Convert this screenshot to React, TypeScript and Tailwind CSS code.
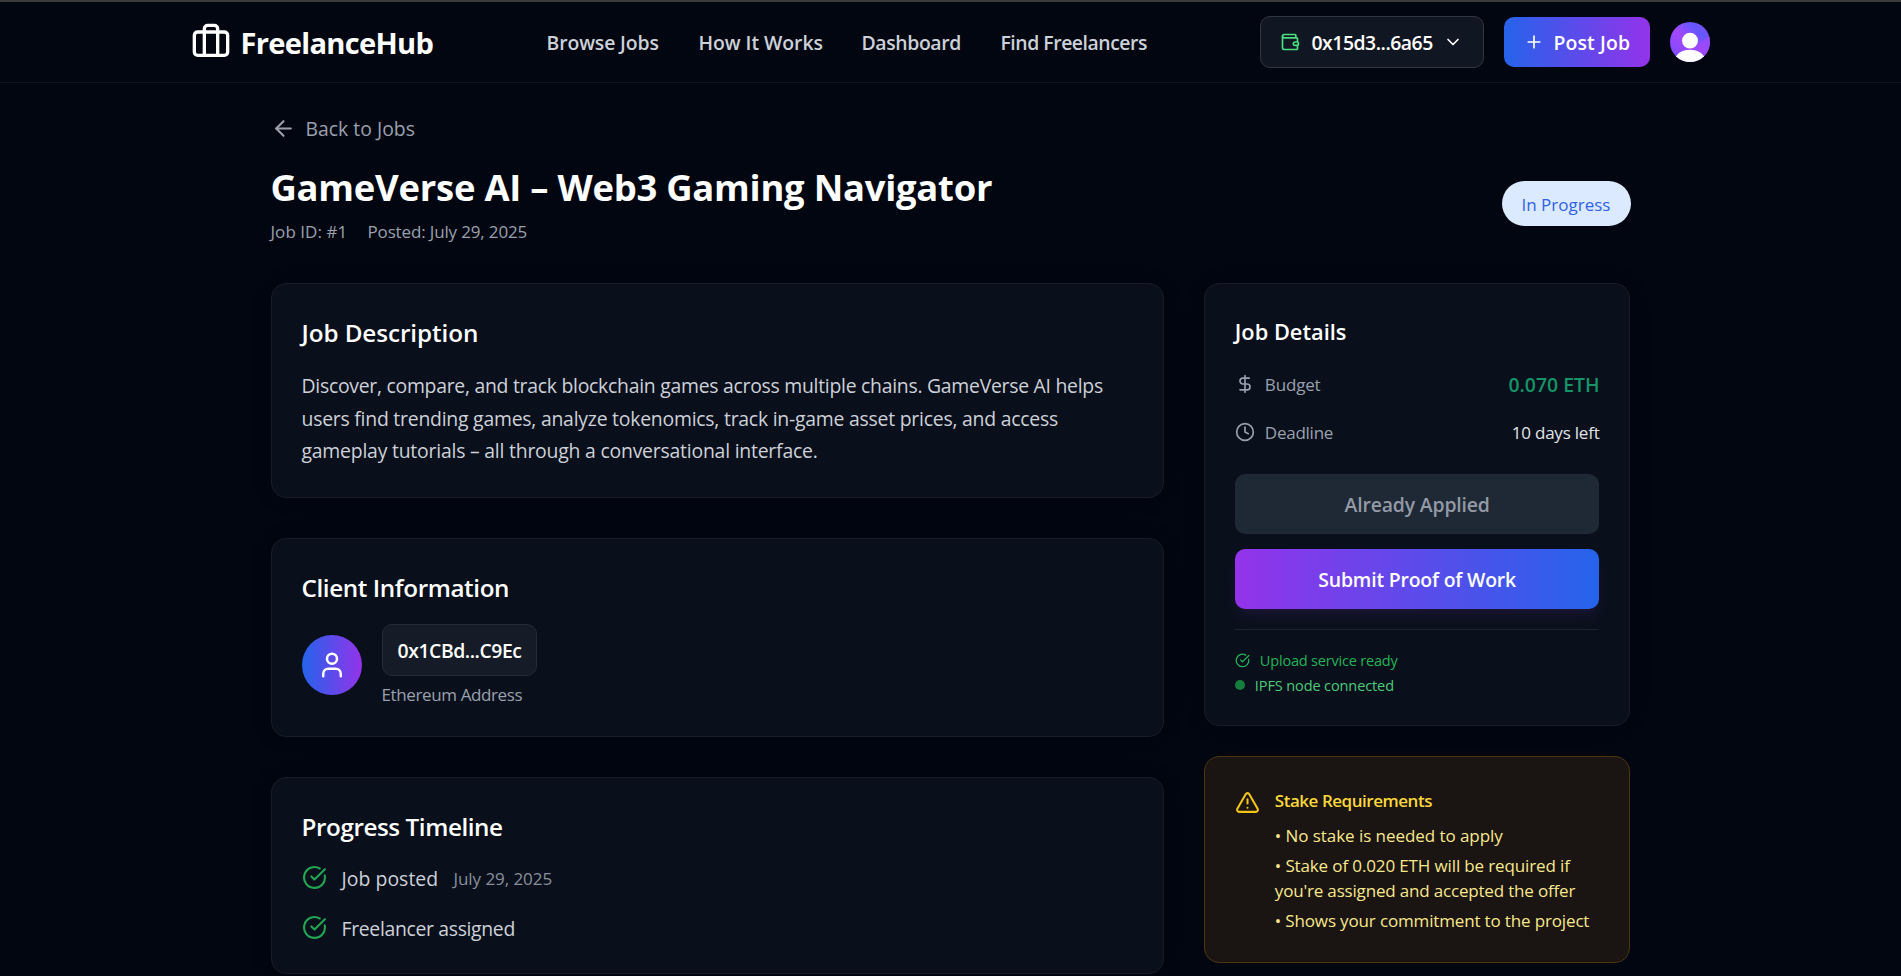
import React from "react";
import {
  ArrowLeft,
  Briefcase,
  ChevronDown,
  CircleCheckBig,
  Clock,
  DollarSign,
  Plus,
  TriangleAlert,
  User,
  Wallet,
} from "lucide-react";

type TxtProps = { className: string; children: React.ReactNode };

function Txt({ className, children }: TxtProps) {
  return <span className={`block translate-y-px whitespace-nowrap ${className}`}>{children}</span>;
}

function Card({ className = "", children }: { className?: string; children: React.ReactNode }) {
  return (
    <section
      className={`rounded-[15px] border border-[#171c28] bg-[#090f1b] p-[30px] shadow-[0_0_24px_rgba(0,0,0,0.08)] ${className}`}
    >
      {children}
    </section>
  );
}

function Header() {
  return (
    <header className="h-[83px] border-t-2 border-b border-t-[#3b3b3d] border-b-[#10151f]">
      <div className="mx-auto flex h-20 w-[1520px] items-center pr-px">
        <a className="flex w-[245px] items-center gap-2.5 text-white">
          <Briefcase size={40} className="shrink-0" />
          <span className="pt-0.5">
            <Txt className="text-[29.1px] font-bold tracking-[-0.7px]">FreelanceHub</Txt>
          </span>
        </a>
        <nav className="ml-[111px] flex items-center gap-10 text-[19.4px] font-semibold text-[#cdd1d9]">
          <a className="w-[112px]">
            <Txt className="tracking-[-0.12px]">Browse Jobs</Txt>
          </a>
          <a className="w-[123px]">
            <Txt className="tracking-[-0.05px]">How It Works</Txt>
          </a>
          <a className="w-[99px]">
            <Txt className="tracking-[-0.38px]">Dashboard</Txt>
          </a>
          <a className="w-[147px]">
            <Txt className="tracking-[-0.46px]">Find Freelancers</Txt>
          </a>
        </nav>
        <div className="ml-auto flex items-center gap-5">
          <button className="flex h-[52px] w-[224px] items-center gap-2.5 rounded-[10px] border border-[#303642] bg-[#111722] px-[19px] text-white">
            <Wallet size={20} className="shrink-0 text-[#4ade80]" />
            <Txt className="w-[123px] pl-0.5 text-left text-[19.4px] font-semibold tracking-[-0.48px]">0x15d3...6a65</Txt>
            <ChevronDown size={20} className="shrink-0" />
          </button>
          <button className="flex h-[50px] w-[146px] items-center gap-2.5 rounded-[10px] bg-linear-to-r/srgb from-[#2563eb] to-[#9333ea] px-5 text-white">
            <Plus size={20} className="shrink-0" />
            <Txt className="text-[19.4px] font-semibold tracking-[0.12px]">Post Job</Txt>
          </button>
          <svg width="40" height="40" viewBox="0 0 40 40">
            <defs>
              <linearGradient id="avatar-bg" x1="0.1" y1="0.9" x2="0.9" y2="0.1">
                <stop offset="0" stopColor="#7c4dff" />
                <stop offset="0.45" stopColor="#a447fb" />
                <stop offset="0.8" stopColor="#6357ff" />
                <stop offset="1" stopColor="#7d50fe" />
              </linearGradient>
              <clipPath id="avatar-clip">
                <circle cx="20" cy="20" r="20" />
              </clipPath>
            </defs>
            <g clipPath="url(#avatar-clip)">
              <rect width="40" height="40" fill="url(#avatar-bg)" />
              <path d="M26 24L40 13V36L34 34Z" fill="#a447fb" opacity="0.75" />
              <circle cx="20" cy="18.7" r="7.9" fill="#fff" />
              <ellipse cx="20" cy="38.5" rx="15" ry="10.8" fill="#fff" />
            </g>
          </svg>
        </div>
      </div>
    </header>
  );
}

function TitleBlock() {
  return (
    <>
      <a className="flex h-[30px] items-center gap-2.5 text-[#99a1af]">
        <ArrowLeft size={25} className="shrink-0" />
        <Txt className="text-[19.4px]">Back to Jobs</Txt>
      </a>
      <div className="mt-5 mb-10 flex items-center justify-between">
        <div>
          <h1 className="h-[45px] text-white">
            <Txt className="pt-px text-[36.4px] leading-[45px] font-bold tracking-[-0.24px]">
              GameVerse AI – Web3 Gaming Navigator
            </Txt>
          </h1>
          <div className="mt-2.5 flex h-[25px] gap-5 text-[17px] leading-[25px] text-[#99a1af]">
            <Txt className="w-[77px] tracking-[0.05px]">Job ID: #1</Txt>
            <Txt className="tracking-[-0.15px]">Posted: July 29, 2025</Txt>
          </div>
        </div>
        <div className="flex h-[45px] w-[129px] items-center justify-center rounded-full bg-[#dbeafe] pt-px text-[#2f62e6]">
          <Txt className="text-[17px] font-medium">In Progress</Txt>
        </div>
      </div>
    </>
  );
}

function CardTitle({ className, children }: TxtProps) {
  return (
    <h2 className="mb-5 h-[35px] text-white">
      <Txt className={`text-[24.25px] leading-[35px] font-semibold ${className}`}>{children}</Txt>
    </h2>
  );
}

function JobDescription() {
  return (
    <Card>
      <CardTitle className="tracking-[-0.08px]">Job Description</CardTitle>
      <div className="text-[19.4px] leading-[32.5px] text-[#cdd1d9]">
        <Txt className="tracking-[-0.27px]">
          Discover, compare, and track blockchain games across multiple chains. GameVerse AI helps
        </Txt>
        <Txt className="tracking-[-0.233px]">
          users find trending games, analyze tokenomics, track in-game asset prices, and access
        </Txt>
        <Txt className="tracking-[-0.215px]">gameplay tutorials – all through a conversational interface.</Txt>
      </div>
    </Card>
  );
}

function ClientInformation() {
  return (
    <Card>
      <CardTitle className="tracking-[-0.4px]">Client Information</CardTitle>
      <div className="flex items-center gap-5">
        <div className="flex size-[60px] items-center justify-center rounded-full bg-linear-to-r/srgb from-[#2563eb] to-[#9333ea] text-white">
          <User size={30} />
        </div>
        <div>
          <div className="flex h-[52px] w-[155px] items-center rounded-[10px] border border-[#252b36] bg-[#151b27] px-[15px] text-white">
            <Txt className="text-[19.4px] font-semibold tracking-[-0.44px]">0x1CBd...C9Ec</Txt>
          </div>
          <Txt className="mt-[5px] h-[25px] text-[17px] leading-[25px] tracking-[-0.38px] text-[#99a1af]">
            Ethereum Address
          </Txt>
        </div>
      </div>
    </Card>
  );
}

function ProgressTimeline() {
  return (
    <Card>
      <CardTitle className="tracking-[-0.43px]">Progress Timeline</CardTitle>
      <ul className="flex flex-col gap-5 text-[19.4px] text-[#cdd1d9]">
        <li className="flex h-[30px] items-center gap-[15px]">
          <CircleCheckBig size={25} className="text-[#22a652]" />
          <Txt className="w-[97px] tracking-[0.05px]">Job posted</Txt>
          <Txt className="text-[17px] tracking-[-0.06px] text-[#8a909d]">July 29, 2025</Txt>
        </li>
        <li className="flex h-[30px] items-center gap-[15px]">
          <CircleCheckBig size={25} className="text-[#22a652]" />
          <Txt className="tracking-[-0.33px]">Freelancer assigned</Txt>
        </li>
      </ul>
    </Card>
  );
}

function JobDetails() {
  return (
    <Card>
      <h2 className="mb-5 h-[35px] text-white">
        <Txt className="text-[21.8px] leading-[33px] font-semibold tracking-[0px]">Job Details</Txt>
      </h2>
      <div className="flex h-[30px] items-center gap-2.5 text-[17px] text-[#99a1af]">
        <DollarSign size={20} />
        <Txt className="tracking-[-0.16px]">Budget</Txt>
        <Txt className="ml-auto text-[19.4px] font-semibold text-[#159467]">0.070 ETH</Txt>
      </div>
      <div className="mt-5 flex h-[25px] items-center gap-2.5 text-[17px] text-[#99a1af]">
        <Clock size={20} />
        <Txt className="tracking-[-0.25px]">Deadline</Txt>
        <Txt className="ml-auto font-medium tracking-[-0.22px] text-[#e2e5ea]">10 days left</Txt>
      </div>
      <button className="mt-[30px] flex h-[60px] w-full items-center justify-center rounded-[10px] bg-[#1f2835] text-[#939aa6]">
        <Txt className="text-[19.4px] font-semibold tracking-[-0.15px]">Already Applied</Txt>
      </button>
      <button className="mt-[15px] flex h-[60px] w-full items-center justify-center rounded-[10px] bg-linear-to-r/srgb from-[#9333ea] to-[#2563eb] text-white shadow-lg shadow-purple-500/8">
        <Txt className="text-[19.4px] font-semibold tracking-[-0.18px]">Submit Proof of Work</Txt>
      </button>
      <div className="mt-5 border-t border-[#1c2432] pt-5">
        <div className="flex h-5 items-center gap-2.5 text-[#24b356]">
          <CircleCheckBig size={15} />
          <Txt className="text-[14.55px] tracking-[-0.21px]">Upload service ready</Txt>
        </div>
        <div className="mt-[5px] flex h-5 items-center gap-2.5 text-[#4ccb7c]">
          <span className="size-2.5 rounded-full bg-[#157d3d]" />
          <Txt className="text-[14.55px] tracking-[-0.13px]">IPFS node connected</Txt>
        </div>
      </div>
    </Card>
  );
}

function StakeRequirements() {
  return (
    <section className="mt-[30px] flex h-[207px] gap-[15px] rounded-[15px] border border-[#4d3510] bg-[#1a1412] p-[30px]">
      <TriangleAlert size={25} className="mt-[2.5px] shrink-0 text-[#f3c418]" />
      <div className="text-[17px] leading-[25px] text-[#f8e88c]">
        <Txt className="font-semibold tracking-[-0.47px] text-[#fbd83c]">Stake Requirements</Txt>
        <ul className="mt-2.5 flex flex-col gap-[5px]">
          <li>
            <Txt className="tracking-[-0.06px]">• No stake is needed to apply</Txt>
          </li>
          <li>
            <Txt className="tracking-[-0.13px]">• Stake of 0.020 ETH will be required if</Txt>
            <Txt className="tracking-[-0.18px]">you're assigned and accepted the offer</Txt>
          </li>
          <li>
            <Txt className="tracking-[-0.15px]">• Shows your commitment to the project</Txt>
          </li>
        </ul>
      </div>
    </section>
  );
}

export default function App() {
  return (
    <div className="h-[976px] overflow-hidden bg-[#020610] font-['Open_Sans','Noto_Sans',sans-serif]">
      <Header />
      <main className="mx-auto w-[1360px] pt-[30px]">
        <TitleBlock />
        <div className="grid grid-cols-3 items-start gap-10">
          <div className="col-span-2 flex flex-col gap-10">
            <JobDescription />
            <ClientInformation />
            <ProgressTimeline />
          </div>
          <aside>
            <JobDetails />
            <StakeRequirements />
          </aside>
        </div>
      </main>
    </div>
  );
}
